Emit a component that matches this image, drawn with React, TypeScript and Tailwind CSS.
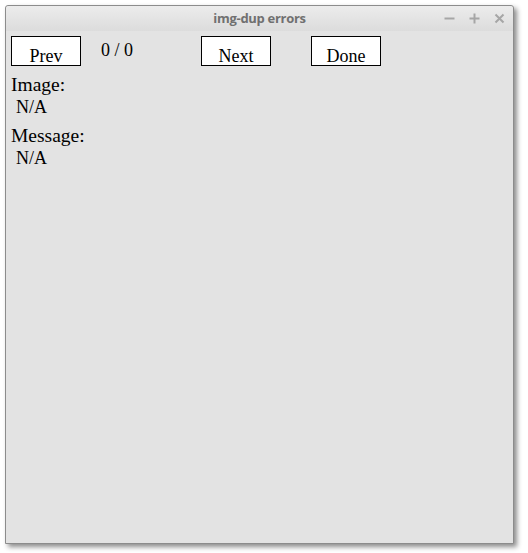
import React from 'react';

const serif = { fontFamily: '"Liberation Serif", "Times New Roman", serif' };

const WinControls: React.FC = () => (
  <div className="absolute right-[8px] top-0 h-full flex items-center gap-[14px] text-[#a6a6a6]">
    <svg width="11" height="11" viewBox="0 0 11 11">
      <path d="M0.5 5.5h10" stroke="currentColor" strokeWidth="2" />
    </svg>
    <svg width="11" height="11" viewBox="0 0 11 11">
      <path d="M0.5 5.5h10M5.5 0.5v10" stroke="currentColor" strokeWidth="2" />
    </svg>
    <svg width="11" height="11" viewBox="0 0 11 11">
      <path d="M1.5 1.5l8 8M9.5 1.5l-8 8" stroke="currentColor" strokeWidth="2" />
    </svg>
  </div>
);

const Button: React.FC<{ label: string; className?: string }> = ({ label, className }) => (
  <div
    className={`w-[70px] h-[30px] border border-black bg-white text-center text-[18px] leading-[20px] pt-[9px] text-black ${className ?? ''}`}
    style={serif}
  >
    {label}
  </div>
);

const Field: React.FC<{ label: string; value: string; className?: string }> = ({ label, value, className }) => (
  <div className={className} style={serif}>
    <div className="text-[19.5px] leading-[23px] text-black">{label}</div>
    <div className="text-[18px] leading-[23px] text-black pl-[5px]">{value}</div>
  </div>
);

export default function App() {
  return (
    <div className="w-[528px] h-[553px] bg-white pt-[5px] pl-[5px]">
      <div className="w-[509px] h-[539px] flex flex-col border border-[#8c8c8c] rounded-t-[3px] bg-[#e3e3e3] shadow-[3px_3px_5px_rgba(0,0,0,0.45)]">
        <div className="relative h-[25px] shrink-0 rounded-t-[3px] bg-gradient-to-b from-[#ececec] to-[#dcdcdc] flex items-center justify-center">
          <span
            className="text-[13px] font-bold text-[#707070] tracking-[-0.3px]"
            style={{ fontFamily: '"Open Sans", "DejaVu Sans", sans-serif' }}
          >
            img-dup errors
          </span>
          <WinControls />
        </div>
        <div className="flex-1 pl-[5px] pt-[5px]">
          <div className="flex items-start">
            <Button label="Prev" />
            <div className="ml-[20px] w-[100px] pt-[4px] text-[18px] leading-[20px] text-black" style={serif}>
              0 / 0
            </div>
            <Button label="Next" />
            <Button label="Done" className="ml-[40px]" />
          </div>
          <Field label="Image:" value="N/A" className="mt-[7px]" />
          <Field label="Message:" value="N/A" className="mt-[5px]" />
        </div>
      </div>
    </div>
  );
}
